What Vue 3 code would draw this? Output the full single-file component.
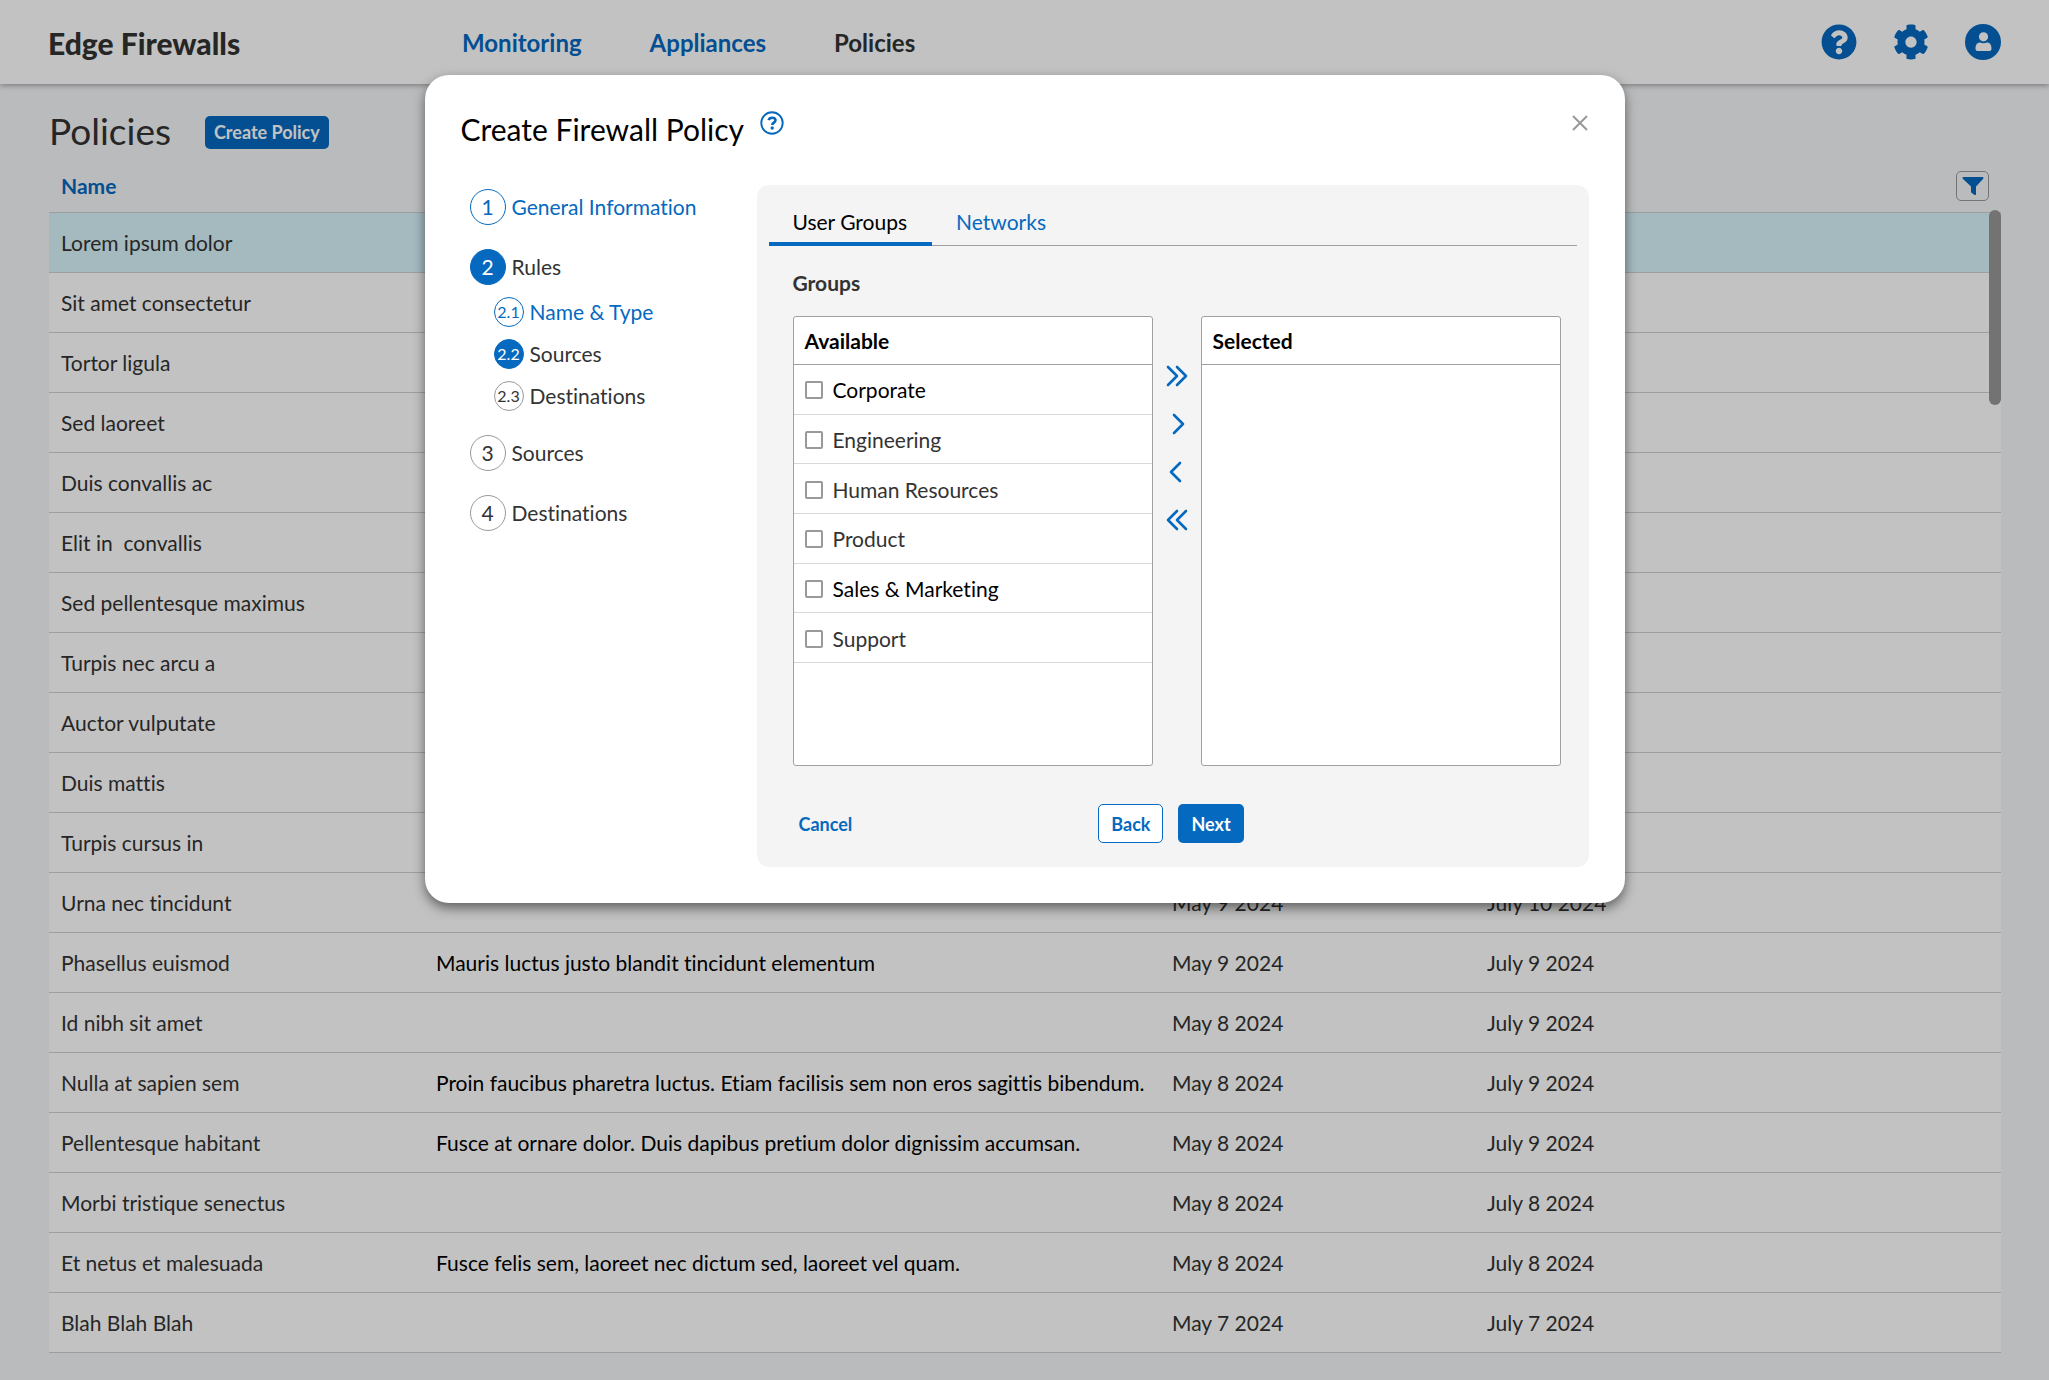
<script setup>
import { ref } from 'vue'

const navItems = [
  { label: 'Monitoring', current: false },
  { label: 'Appliances', current: false },
  { label: 'Policies', current: true },
]

const policies = [
  { name: 'Lorem ipsum dolor', selected: true },
  { name: 'Sit amet consectetur' },
  { name: 'Tortor ligula' },
  { name: 'Sed laoreet' },
  { name: 'Duis convallis ac' },
  { name: 'Elit in  convallis' },
  { name: 'Sed pellentesque maximus' },
  { name: 'Turpis nec arcu a' },
  { name: 'Auctor vulputate' },
  { name: 'Duis mattis' },
  { name: 'Turpis cursus in' },
  { name: 'Urna nec tincidunt', created: 'May 9 2024', updated: 'July 10 2024' },
  { name: 'Phasellus euismod', description: 'Mauris luctus justo blandit tincidunt elementum', created: 'May 9 2024', updated: 'July 9 2024' },
  { name: 'Id nibh sit amet', created: 'May 8 2024', updated: 'July 9 2024' },
  { name: 'Nulla at sapien sem', description: 'Proin faucibus pharetra luctus. Etiam facilisis sem non eros sagittis bibendum.', created: 'May 8 2024', updated: 'July 9 2024' },
  { name: 'Pellentesque habitant', description: 'Fusce at ornare dolor. Duis dapibus pretium dolor dignissim accumsan.', created: 'May 8 2024', updated: 'July 9 2024' },
  { name: 'Morbi tristique senectus', created: 'May 8 2024', updated: 'July 8 2024' },
  { name: 'Et netus et malesuada', description: 'Fusce felis sem, laoreet nec dictum sed, laoreet vel quam.', created: 'May 8 2024', updated: 'July 8 2024' },
  { name: 'Blah Blah Blah', created: 'May 7 2024', updated: 'July 7 2024' },
]

const steps = [
  { number: '1', label: 'General Information', state: 'done' },
  {
    number: '2',
    label: 'Rules',
    state: 'current',
    children: [
      { number: '2.1', label: 'Name & Type', state: 'done' },
      { number: '2.2', label: 'Sources', state: 'current' },
      { number: '2.3', label: 'Destinations', state: 'todo' },
    ],
  },
  { number: '3', label: 'Sources', state: 'todo' },
  { number: '4', label: 'Destinations', state: 'todo' },
]

const groups = [
  { label: 'Corporate', strong: true },
  { label: 'Engineering' },
  { label: 'Human Resources' },
  { label: 'Product' },
  { label: 'Sales & Marketing', strong: true },
  { label: 'Support' },
]
const checked = ref([])

const moves = [
  { label: 'Add all', path: 'M2 2l9 9-9 9M11 2l9 9-9 9' },
  { label: 'Add checked', path: 'M8 2l9 9-9 9' },
  { label: 'Remove checked', path: 'M14 2l-9 9 9 9' },
  { label: 'Remove all', path: 'M11 2l-9 9 9 9M20 2l-9 9 9 9' },
]
</script>

<template>
  <div class="app">
    <header class="topbar">
      <div class="brand">Edge Firewalls</div>
      <nav class="nav">
        <a v-for="item in navItems" :key="item.label" href="#" :class="{ current: item.current }">{{ item.label }}</a>
      </nav>
      <div class="tools">
        <button type="button" aria-label="Help">
          <svg viewBox="0 0 512 512" width="36" height="36"><path fill="currentColor" d="M504 256c0 137-111 248-248 248S8 393 8 256 119 8 256 8s248 111 248 248zM262.700 90c-54.500 0-89.300 23-116.500 63.800-3.500 5.300-2.400 12.400 2.700 16.300l34.700 26.300c5.200 3.900 12.600 3 16.700-2.100 17.900-22.700 30.100-35.800 57.300-35.800 20.400 0 45.700 13.100 45.700 33 0 15-12.400 22.700-32.500 34C247.100 238.500 216 254.900 216 296v4c0 6.600 5.400 12 12 12h56c6.600 0 12-5.400 12-12v-1.300c0-28.500 83.200-29.600 83.200-106.700 0-58-60.200-102-116.500-102zM256 338c-25.400 0-46 20.600-46 46s20.600 46 46 46 46-20.600 46-46-20.600-46-46-46z"/></svg>
        </button>
        <button type="button" aria-label="Settings">
          <svg viewBox="0 0 512 512" width="36" height="36"><path fill="currentColor" d="M487.400 315.700l-42.600-24.600c4.300-23.200 4.300-47 0-70.200l42.600-24.600c4.900-2.800 7.100-8.600 5.500-14-11.100-35.600-30-67.800-54.700-94.600-3.800-4.100-10-5.100-14.800-2.300L380.800 110c-17.900-15.400-38.500-27.300-60.800-35.100V25.800c0-5.600-3.900-10.500-9.400-11.700-36.700-8.200-74.300-7.800-109.200 0-5.500 1.200-9.400 6.100-9.400 11.700V75c-22.200 7.900-42.800 19.800-60.800 35.100L88.700 85.500c-4.900-2.800-11-1.900-14.800 2.300-24.700 26.700-43.600 58.900-54.700 94.600-1.700 5.400.6 11.200 5.500 14L67.300 221c-4.300 23.200-4.300 47 0 70.200l-42.600 24.600c-4.900 2.800-7.100 8.600-5.500 14 11.100 35.600 30 67.800 54.700 94.600 3.800 4.100 10 5.100 14.800 2.300l42.600-24.600c17.900 15.400 38.500 27.300 60.800 35.100v49.200c0 5.600 3.900 10.500 9.400 11.700 36.700 8.200 74.300 7.800 109.200 0 5.500-1.200 9.400-6.100 9.400-11.700v-49.200c22.200-7.900 42.800-19.800 60.800-35.100l42.600 24.600c4.900 2.800 11 1.900 14.800-2.300 24.700-26.700 43.600-58.900 54.700-94.600 1.500-5.500-.7-11.300-5.600-14.100zM256 336c-44.100 0-80-35.900-80-80s35.900-80 80-80 80 35.900 80 80-35.900 80-80 80z"/></svg>
        </button>
        <button type="button" aria-label="Account">
          <svg viewBox="0 0 36 36" width="36" height="36"><circle cx="18" cy="18" r="18" fill="currentColor"/><circle cx="18.500" cy="12.800" r="4.600" fill="#fff"/><path d="M10.500 24.500c0-4 2-6 4.500-6 2 1 5 1 7 0 2.500 0 4.500 2 4.500 6 0 1.500-.5 2.500-2 2.500h-12c-1.500 0-2-1-2-2.500z" fill="#fff"/></svg>
        </button>
      </div>
    </header>

    <main class="page">
      <div class="page-head">
        <h1>Policies</h1>
        <button type="button" class="btn primary small">Create Policy</button>
      </div>

      <div class="table-wrap">
        <table>
          <colgroup>
            <col class="c-name" />
            <col />
            <col class="c-created" />
            <col class="c-updated" />
          </colgroup>
          <thead>
            <tr>
              <th scope="col">Name</th>
              <th></th>
              <th></th>
              <th>
                <button type="button" class="filter" aria-label="Filter">
                  <svg viewBox="0 0 22 20" width="22" height="20"><path fill="currentColor" d="M1.500 1h19c1 0 1.300 1 .7 1.700L14 10.500v7.700c0 .8-.7 1-1.300.7l-3-2c-.5-.4-.7-.7-.7-1.300v-5.100L.8 2.700C.2 2 .5 1 1.500 1z"/></svg>
                </button>
              </th>
            </tr>
          </thead>
          <tbody>
            <tr v-for="p in policies" :key="p.name" :class="{ selected: p.selected }">
              <td>{{ p.name }}</td>
              <td class="description">{{ p.description }}</td>
              <td>{{ p.created }}</td>
              <td>{{ p.updated }}</td>
            </tr>
          </tbody>
        </table>
        <div class="scroll-thumb"></div>
      </div>
    </main>

    <div class="backdrop">
      <section class="modal" role="dialog" aria-modal="true" aria-labelledby="modal-title">
        <div class="modal-head">
          <h2 id="modal-title">Create Firewall Policy</h2>
          <button type="button" class="hint" aria-label="Help">
            <svg viewBox="0 0 24 24" width="24" height="24"><circle cx="12" cy="12" r="10.700" fill="none" stroke="currentColor" stroke-width="1.900"/><path d="M8.600 9.200c.5-1.700 1.700-2.500 3.500-2.500 2 0 3.400 1 3.400 2.600 0 2.300-3.200 2.300-3.200 4.600" fill="none" stroke="currentColor" stroke-width="2.600"/><circle cx="12.200" cy="17" r="1.700" fill="currentColor"/></svg>
          </button>
          <button type="button" class="close" aria-label="Close">
            <svg viewBox="0 0 16 16" width="16" height="16"><path d="M1 1l14 14M15 1L1 15" stroke="currentColor" stroke-width="2" fill="none"/></svg>
          </button>
        </div>

        <div class="modal-body">
          <ol class="steps">
            <li v-for="step in steps" :key="step.number">
              <a href="#" class="step" :class="step.state"><span class="badge">{{ step.number }}</span>{{ step.label }}</a>
              <ol v-if="step.children" class="substeps">
                <li v-for="sub in step.children" :key="sub.number">
                  <a href="#" class="step" :class="sub.state"><span class="badge">{{ sub.number }}</span>{{ sub.label }}</a>
                </li>
              </ol>
            </li>
          </ol>

          <form class="panel" @submit.prevent>
            <div class="tabs" role="tablist">
              <button type="button" role="tab" aria-selected="true" class="tab active">User Groups</button>
              <button type="button" role="tab" aria-selected="false" class="tab">Networks</button>
            </div>

            <div class="content">
              <h3>Groups</h3>
              <div class="picker">
                <div class="listbox">
                  <h4>Available</h4>
                  <ul>
                    <li v-for="g in groups" :key="g.label">
                      <label :class="{ strong: g.strong }"><input v-model="checked" type="checkbox" :value="g.label" />{{ g.label }}</label>
                    </li>
                  </ul>
                </div>
                <div class="moves">
                  <button v-for="m in moves" :key="m.label" type="button" :aria-label="m.label">
                    <svg viewBox="0 0 22 22" width="22" height="22"><path :d="m.path" fill="none" stroke="currentColor" stroke-width="2.600" stroke-linecap="round" stroke-linejoin="round"/></svg>
                  </button>
                </div>
                <div class="listbox">
                  <h4>Selected</h4>
                </div>
              </div>
              <div class="actions">
                <button type="button" class="btn link">Cancel</button>
                <div class="stepper">
                  <button type="button" class="btn outline">Back</button>
                  <button type="submit" class="btn primary">Next</button>
                </div>
              </div>
            </div>
          </form>
        </div>
      </section>
    </div>
  </div>
</template>

<style>
body {
  background: #f4f6f8;
}
</style>

<style scoped>
.app {
  --blue: #0569bf;
  --ink: #333;
  --line: #a0a0a0;
  position: relative;
  min-height: 100vh;
  overflow: hidden;
  background: #f4f6f8;
  color: var(--ink);
  font: 21px/30px Lato, "Liberation Sans", sans-serif;
  font-variant-ligatures: none;
}
.app * {
  box-sizing: border-box;
}
h1, h2, h3, h4, ul, ol {
  margin: 0;
  padding: 0;
  list-style: none;
}
a {
  color: var(--blue);
  text-decoration: none;
}
button {
  margin: 0;
  padding: 0;
  border: 0;
  background: none;
  color: var(--blue);
  font: inherit;
}
svg {
  display: block;
}

.topbar {
  position: relative;
  display: flex;
  align-items: center;
  height: 84px;
  padding: 0 48px;
  background: #fff;
  box-shadow: 0 1px 6px rgba(0, 0, 0, 0.4);
}
.brand {
  width: 414px;
  padding-top: 2px;
  font-size: 30px;
  font-weight: 900;
}
.nav {
  display: flex;
  flex: 1;
  gap: 68px;
  padding-top: 2px;
  font-size: 24px;
  font-weight: 700;
}
.nav .current {
  color: var(--ink);
}
.tools {
  display: flex;
  gap: 36px;
}

.page {
  padding: 24px 48px 28px 49px;
}
.page-head {
  display: flex;
  align-items: center;
  gap: 34px;
  height: 48px;
}
h1 {
  padding-bottom: 3px;
  font-size: 37px;
  font-weight: 400;
}
.btn {
  height: 39px;
  padding: 0 12px;
  border: 1px solid transparent;
  border-radius: 5px;
  font-size: 18px;
  font-weight: 700;
  line-height: 24px;
}
.btn.primary {
  background: var(--blue);
  color: #fff;
}
.btn.outline {
  border-color: var(--blue);
  background: #fff;
}
.btn.small {
  height: 33px;
  padding: 0 8px;
}
.btn.link {
  padding: 0 5px;
}

.table-wrap {
  position: relative;
}
table {
  width: 100%;
  table-layout: fixed;
  border-collapse: separate;
  border-spacing: 0;
}
.c-name {
  width: 375px;
}
.c-created {
  width: 315px;
}
.c-updated {
  width: 526px;
}
th, td {
  padding: 0 12px;
  border-bottom: 1px solid #d0d0d0;
  text-align: left;
  white-space: pre;
}
th {
  height: 57px;
  padding-top: 4px;
  color: var(--blue);
  font-weight: 700;
}
td {
  height: 60px;
  background: #fff;
}
.selected td {
  background: #d8f5fc;
}
.description {
  color: #000;
}
.filter {
  display: flex;
  align-items: center;
  justify-content: center;
  width: 33px;
  height: 30px;
  margin-left: auto;
  border: 1px solid #999;
  border-radius: 5px;
}
.scroll-thumb {
  position: absolute;
  top: 54px;
  right: 0;
  width: 12px;
  height: 195px;
  border-radius: 6px;
  background: #979797;
}

.backdrop {
  position: absolute;
  inset: 0;
  display: flex;
  align-items: flex-start;
  justify-content: center;
  padding: 75px 24px 24px;
  background: rgba(0, 0, 0, 0.24);
}
.modal {
  width: 100%;
  max-width: 1200px;
  padding: 36px;
  border-radius: 24px;
  background: #fff;
  box-shadow: 0 5px 12px rgba(0, 0, 0, 0.5);
}
.modal-head {
  display: flex;
  align-items: flex-start;
  height: 74px;
}
h2 {
  color: #000;
  font-size: 30px;
  font-weight: 400;
  line-height: 36px;
}
.hint {
  margin-left: 16px;
}
.close {
  margin: 4px 1px 0 auto;
  color: #999;
}

.modal-body {
  display: flex;
}
.steps {
  width: 296px;
  flex: none;
  padding: 4px 0 0 9px;
}
.steps > li {
  margin-bottom: 24px;
}
.step {
  display: flex;
  align-items: center;
  gap: 6px;
  color: var(--ink);
}
.badge {
  display: flex;
  align-items: center;
  justify-content: center;
  width: 36px;
  height: 36px;
  border: 1px solid #999;
  border-radius: 50%;
}
.done,
.done .badge {
  border-color: var(--blue);
  color: var(--blue);
}
.current .badge {
  border-color: var(--blue);
  background: var(--blue);
  color: #fff;
}
.substeps {
  display: grid;
  gap: 12px;
  padding: 12px 0 0 24px;
}
.substeps .badge {
  width: 30px;
  height: 30px;
  font-size: 16px;
}

.panel {
  flex: 1;
  padding: 12px 12px 24px;
  border-radius: 12px;
  background: #f4f4f4;
}
.tabs {
  display: flex;
  height: 49px;
  border-bottom: 1px solid var(--line);
}
.tab {
  height: 49px;
  padding: 0 25px 0 24px;
}
.tab.active {
  box-shadow: inset 0 -4px var(--blue);
  color: #000;
}
.content {
  padding: 22px 16px 0 24px;
}
h3 {
  font-size: 21px;
  font-weight: 700;
}
.picker {
  display: flex;
  height: 450px;
  margin-top: 18px;
}
.listbox {
  flex: 1;
  border: 1px solid var(--line);
  border-radius: 3px;
  background: #fff;
  color: #000;
}
h4 {
  height: 48px;
  padding: 0 11px;
  border-bottom: 1px solid var(--line);
  font-size: 21px;
  font-weight: 700;
  line-height: 48px;
}
.listbox ul {
  display: grid;
  grid-template-rows: repeat(6, 1fr);
  height: 298px;
}
.listbox li {
  border-bottom: 1px solid #d9d9d9;
}
label {
  display: flex;
  align-items: center;
  gap: 10px;
  height: 100%;
  padding: 2px 11px 0;
  color: var(--ink);
}
label.strong {
  color: #000;
}
input {
  appearance: none;
  width: 18px;
  height: 18px;
  margin: 0;
  border: 2px solid #999;
  border-radius: 2px;
  background: #fff;
}
input:checked {
  background: var(--blue);
}
.moves {
  display: flex;
  flex-direction: column;
  align-items: center;
  gap: 26px;
  width: 48px;
  padding-top: 49px;
}
.actions {
  display: flex;
  align-items: center;
  justify-content: space-between;
  margin-top: 38px;
}
.stepper {
  display: flex;
  flex: 1;
  gap: 15px;
  padding-left: 240px;
}
</style>
